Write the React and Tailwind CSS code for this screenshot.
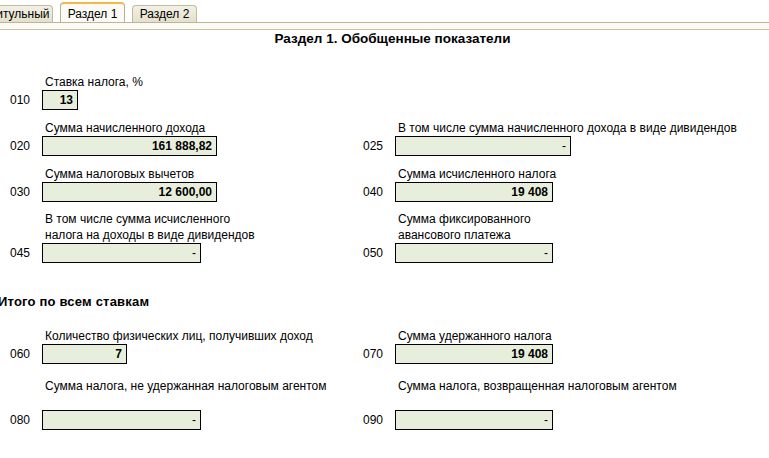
import React from "react";

const font = { fontFamily: '"Liberation Sans", Arial, sans-serif' };

function Tab({ children, active, className = "" }) {
  if (active) {
    return (
      <div
        className={`relative z-10 h-[21px] -mb-[1px] flex items-center justify-center rounded-t-[4px] border border-b-0 border-[#b8b096] border-t-2 border-t-[#f2b94a] bg-[#fbfaf5] text-[12px] text-black ${className}`}
      >
        {children}
      </div>
    );
  }
  return (
    <div
      className={`h-[17px] flex items-center justify-center rounded-t-[4px] border border-b-0 border-[#c2bb9f] bg-gradient-to-b from-[#f3f1e6] to-[#e4e0cb] text-[12px] text-black ${className}`}
    >
      {children}
    </div>
  );
}

function Field({ code, label, value, boxW, spacer }) {
  const empty = value === "-";
  return (
    <div className="flex flex-col">
      <div className="pl-[35px] text-[12px] leading-[16px] text-black">{label}</div>
      {spacer && <div className="h-[16px]" />}
      <div className="flex items-center h-[20px]">
        <span className="w-[32px] text-[12px] text-black">{code}</span>
        <div
          className={`h-[20px] ${boxW} border border-black bg-[#e7efdc] pr-[4px] text-right text-[12px] leading-[18px] text-black ${
            empty ? "font-normal" : "font-bold"
          }`}
        >
          {value}
        </div>
      </div>
    </div>
  );
}

export default function App() {
  return (
    <div className="w-[769px] h-[458px] overflow-hidden bg-white" style={font}>
      {/* Tabs */}
      <div className="h-[23px] flex items-end gap-[7px] border-b border-[#bdb597] overflow-hidden">
        <Tab className="w-[67px] -ml-[14px]">Титульный</Tab>
        <Tab active className="w-[65px]">Раздел 1</Tab>
        <Tab className="w-[65px]">Раздел 2</Tab>
      </div>
      <div className="h-[6px] bg-[#fbfaf4] border-b border-[#c8c1a2] box-content" />

      {/* Title */}
      <div className="mt-[1px] pl-[16px] text-center text-[13.5px] font-bold leading-[16px] text-black">
        Раздел 1. Обобщенные показатели
      </div>

      <div className="pl-[10px]">
        <div className="mt-[27px]">
          <Field code="010" label="Ставка налога, %" value="13" boxW="w-[36px]" />
        </div>

        <div className="mt-[10px] grid grid-cols-[353px_1fr] items-end">
          <Field code="020" label="Сумма начисленного дохода" value="161 888,82" boxW="w-[175px]" />
          <Field
            code="025"
            label="В том числе сумма начисленного дохода в виде дивидендов"
            value="-"
            boxW="w-[176px]"
          />
        </div>

        <div className="mt-[10px] grid grid-cols-[353px_1fr] items-end">
          <Field code="030" label="Сумма налоговых вычетов" value="12 600,00" boxW="w-[175px]" />
          <Field code="040" label="Сумма исчисленного налога" value="19 408" boxW="w-[158px]" />
        </div>

        <div className="mt-[9px] grid grid-cols-[353px_1fr] items-end">
          <Field
            code="045"
            label={
              <>
                В том числе сумма исчисленного
                <br />
                налога на доходы в виде дивидендов
              </>
            }
            value="-"
            boxW="w-[159px]"
          />
          <Field
            code="050"
            label={
              <>
                Сумма фиксированного
                <br />
                авансового платежа
              </>
            }
            value="-"
            boxW="w-[158px]"
          />
        </div>
      </div>

      <div className="mt-[31px] -ml-[2px] text-[13px] tracking-[0.2px] font-bold leading-[16px] text-black">
        Итого по всем ставкам
      </div>

      <div className="pl-[10px]">
        <div className="mt-[18px] grid grid-cols-[353px_1fr] items-end">
          <Field
            code="060"
            label="Количество физических лиц, получивших доход"
            value="7"
            boxW="w-[85px]"
          />
          <Field code="070" label="Сумма удержанного налога" value="19 408" boxW="w-[158px]" />
        </div>

        <div className="mt-[14px] grid grid-cols-[353px_1fr] items-end">
          <Field
            code="080"
            label="Сумма налога, не удержанная налоговым агентом"
            value="-"
            boxW="w-[159px]"
            spacer
          />
          <Field
            code="090"
            label="Сумма налога, возвращенная налоговым агентом"
            value="-"
            boxW="w-[158px]"
            spacer
          />
        </div>
      </div>
    </div>
  );
}
